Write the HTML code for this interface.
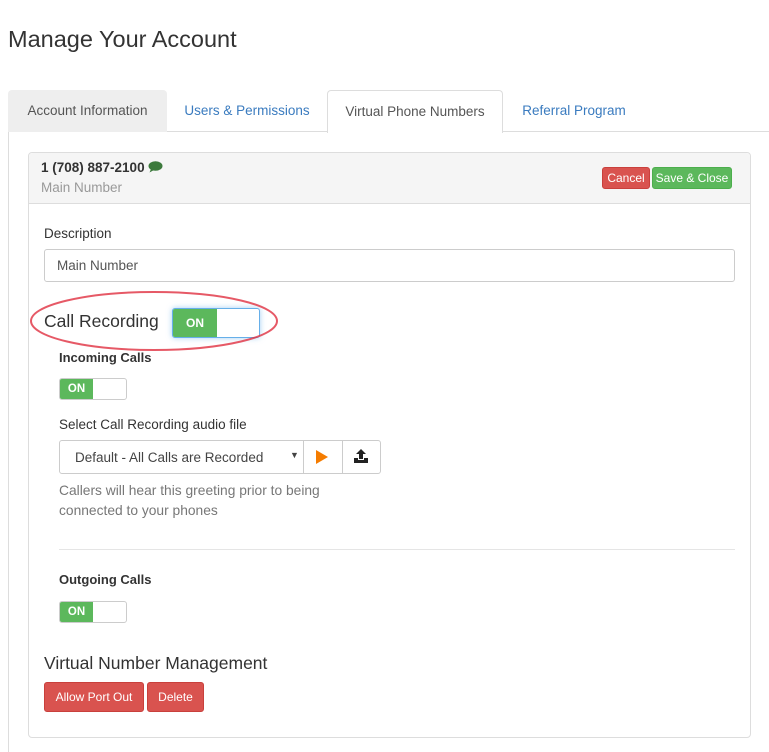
<!DOCTYPE html>
<html><head><style>
*{box-sizing:border-box;margin:0;padding:0}
body{width:769px;height:752px;overflow:hidden;background:#fff;font-family:"Liberation Sans",sans-serif;color:#333;font-size:13px;position:relative}
.a{position:absolute}
h1{position:absolute;left:8px;top:26px;font-size:23.5px;font-weight:normal;color:#333}
.tab{position:absolute;top:90px;height:42px;line-height:42px;font-size:13.5px;color:#3a7bbf;text-align:center}
.btn{position:absolute;color:#fff;font-size:12px;text-align:center;border-radius:3px}
.red{background:#d9534f;border:1px solid #c9403c}
.green{background:#5cb85c;border:1px solid #4cae4c}
.tog{position:absolute;border:1px solid #ccc;border-radius:3px;background:#fff;overflow:hidden}
.tog span{position:absolute;left:0;top:0;bottom:0;background:#5cb85c;color:#fff;font-weight:bold;font-size:11.5px;text-align:center}
</style></head><body>
<h1>Manage Your Account</h1>
<div class="a" style="left:8px;top:131px;width:761px;border-top:1px solid #ddd"></div>
<div class="a" style="left:8px;top:131px;height:621px;border-left:1px solid #ddd"></div>
<div class="tab" style="left:8px;width:159px;background:#eee;color:#555;border-radius:4px 4px 0 0">Account Information</div>
<div class="tab" style="left:167px;width:160px">Users &amp; Permissions</div>
<div class="tab" style="left:327px;width:176px;height:43px;background:#fff;color:#555;border:1px solid #ddd;border-bottom:none;border-radius:4px 4px 0 0">Virtual Phone Numbers</div>
<div class="tab" style="left:503px;width:142px">Referral Program</div>

<div class="a" style="left:28px;top:152px;width:723px;height:586px;border:1px solid #ddd;border-radius:4px"></div>
<div class="a" style="left:29px;top:153px;width:721px;height:51px;background:#f5f5f5;border-bottom:1px solid #ddd;border-radius:4px 4px 0 0"></div>
<div class="a" style="left:41px;top:160px;font-size:13.5px;font-weight:bold;color:#333">1 (708) 887-2100 <svg width="15" height="12" viewBox="0 0 15 12" style="vertical-align:-1px"><ellipse cx="7.5" cy="5" rx="7" ry="4.8" fill="#3c7a3c"/><path d="M3 8 L1.5 11.5 L6 9z" fill="#3c7a3c"/></svg></div>
<div class="a" style="left:41px;top:180px;font-size:13.5px;color:#999">Main Number</div>
<div class="btn red" style="left:602px;top:167px;width:48px;height:22px;line-height:20px">Cancel</div>
<div class="btn green" style="left:652px;top:167px;width:80px;height:22px;line-height:20px">Save &amp; Close</div>

<div class="a" style="left:44px;top:226px;font-size:13.5px">Description</div>
<div class="a" style="left:44px;top:249px;width:691px;height:33px;border:1px solid #ccc;border-radius:3px;padding-left:12px;line-height:31px;font-size:13.5px;color:#555">Main Number</div>

<div class="a" style="left:44px;top:311px;font-size:17.5px">Call Recording</div>
<div class="tog" style="left:172px;top:308px;width:88px;height:30px;border-color:#66afe9;box-shadow:0 0 6px rgba(102,175,233,.6)"><span style="width:44px;line-height:28px;font-size:12px">ON</span></div>
<svg class="a" style="left:28px;top:288px" width="252" height="66"><ellipse cx="126" cy="33" rx="123" ry="29" fill="none" stroke="#e03040" stroke-width="2" opacity=".8"/></svg>

<div class="a" style="left:59px;top:350px;font-weight:bold;font-size:13px">Incoming Calls</div>
<div class="tog" style="left:59px;top:378px;width:68px;height:22px"><span style="width:33px;line-height:20px">ON</span></div>

<div class="a" style="left:59px;top:417px;font-size:13.5px">Select Call Recording audio file</div>
<div class="a" style="left:59px;top:440px;width:322px;height:34px;border:1px solid #ccc;border-radius:3px"></div>
<div class="a" style="left:75px;top:450px;font-size:13.5px;color:#444">Default - All Calls are Recorded</div>
<div class="a" style="left:290px;top:450px;font-size:9px;color:#444">▼</div>
<div class="a" style="left:303px;top:441px;height:32px;border-left:1px solid #ccc"></div>
<div class="a" style="left:342px;top:441px;height:32px;border-left:1px solid #ccc"></div>
<svg class="a" style="left:315px;top:450px" width="14" height="14"><path d="M1 0 L13 7 L1 14z" fill="#f57c00"/></svg>
<svg class="a" style="left:354px;top:449px" width="14" height="14"><path d="M7 0 L12 5 H9 V10 H5 V5 H2z" fill="#222"/><path d="M0 9 H4 V11 H10 V9 H14 V14 H0z" fill="#222"/></svg>
<div class="a" style="left:59px;top:481px;font-size:13.8px;color:#777;line-height:20px">Callers will hear this greeting prior to being<br>connected to your phones</div>

<div class="a" style="left:59px;top:549px;width:676px;border-top:1px solid #e5e5e5"></div>
<div class="a" style="left:59px;top:572px;font-weight:bold;font-size:13px">Outgoing Calls</div>
<div class="tog" style="left:59px;top:601px;width:68px;height:22px"><span style="width:33px;line-height:20px">ON</span></div>

<div class="a" style="left:44px;top:653px;font-size:17.5px">Virtual Number Management</div>
<div class="btn red" style="left:44px;top:682px;width:100px;height:30px;line-height:28px">Allow Port Out</div>
<div class="btn red" style="left:147px;top:682px;width:57px;height:30px;line-height:28px">Delete</div>
</body></html>
